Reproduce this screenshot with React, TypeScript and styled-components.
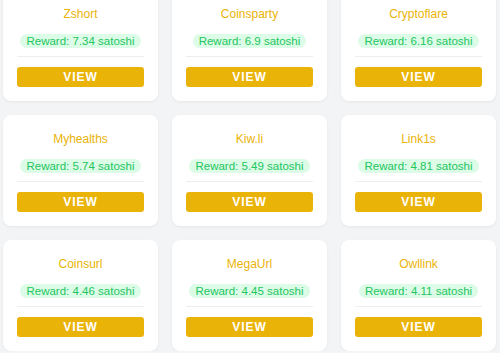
import React from "react";
import styled, { createGlobalStyle } from "styled-components";

const GlobalStyle = createGlobalStyle`
  html, body {
    margin: 0;
    padding: 0;
    background: #f3f4f6;
    font-family: "Liberation Sans", Arial, sans-serif;
    overflow: hidden;
  }
`;

const Grid = styled.div`
  display: grid;
  grid-template-columns: repeat(3, 155px);
  column-gap: 14px;
  row-gap: 14px;
  padding-left: 3px;
  margin-top: -10px;
`;

const Card = styled.div`
  background: #ffffff;
  border-radius: 8px;
  box-shadow: 0 1px 3px rgba(0, 0, 0, 0.06);
  padding: 15px 14px 14px;
  display: flex;
  flex-direction: column;
  align-items: center;
  height: 111px;
  box-sizing: border-box;
`;

const Title = styled.div`
  color: #eab308;
  font-size: 12px;
  line-height: 18px;
  height: 18px;
`;

const Reward = styled.div`
  margin-top: 11px;
  background: #dcfce7;
  color: #22c55e;
  font-size: 11.5px;
  line-height: 14px;
  height: 14px;
  padding: 0 6px;
  border-radius: 999px;
  white-space: nowrap;
`;

const Divider = styled.div`
  align-self: stretch;
  height: 1px;
  background: #eeeeee;
  margin-top: 8px;
`;

const ViewButton = styled.button`
  align-self: stretch;
  margin-top: 10px;
  height: 20px;
  border: none;
  border-radius: 3px;
  background: #eab308;
  color: #ffffff;
  font-family: "Liberation Sans", Arial, sans-serif;
  font-weight: 700;
  font-size: 12px;
  letter-spacing: 1px;
  padding: 0;
  cursor: pointer;
`;

const sites = [
  { name: "Zshort", reward: "7.34" },
  { name: "Coinsparty", reward: "6.9" },
  { name: "Cryptoflare", reward: "6.16" },
  { name: "Myhealths", reward: "5.74" },
  { name: "Kiw.li", reward: "5.49" },
  { name: "Link1s", reward: "4.81" },
  { name: "Coinsurl", reward: "4.46" },
  { name: "MegaUrl", reward: "4.45" },
  { name: "Owllink", reward: "4.11" },
];

const App: React.FC = () => {
  return (
    <>
      <GlobalStyle />
      <Grid>
        {sites.map((s) => (
          <Card key={s.name}>
            <Title>{s.name}</Title>
            <Reward>Reward: {s.reward} satoshi</Reward>
            <Divider />
            <ViewButton>VIEW</ViewButton>
          </Card>
        ))}
      </Grid>
    </>
  );
};

export default App;
